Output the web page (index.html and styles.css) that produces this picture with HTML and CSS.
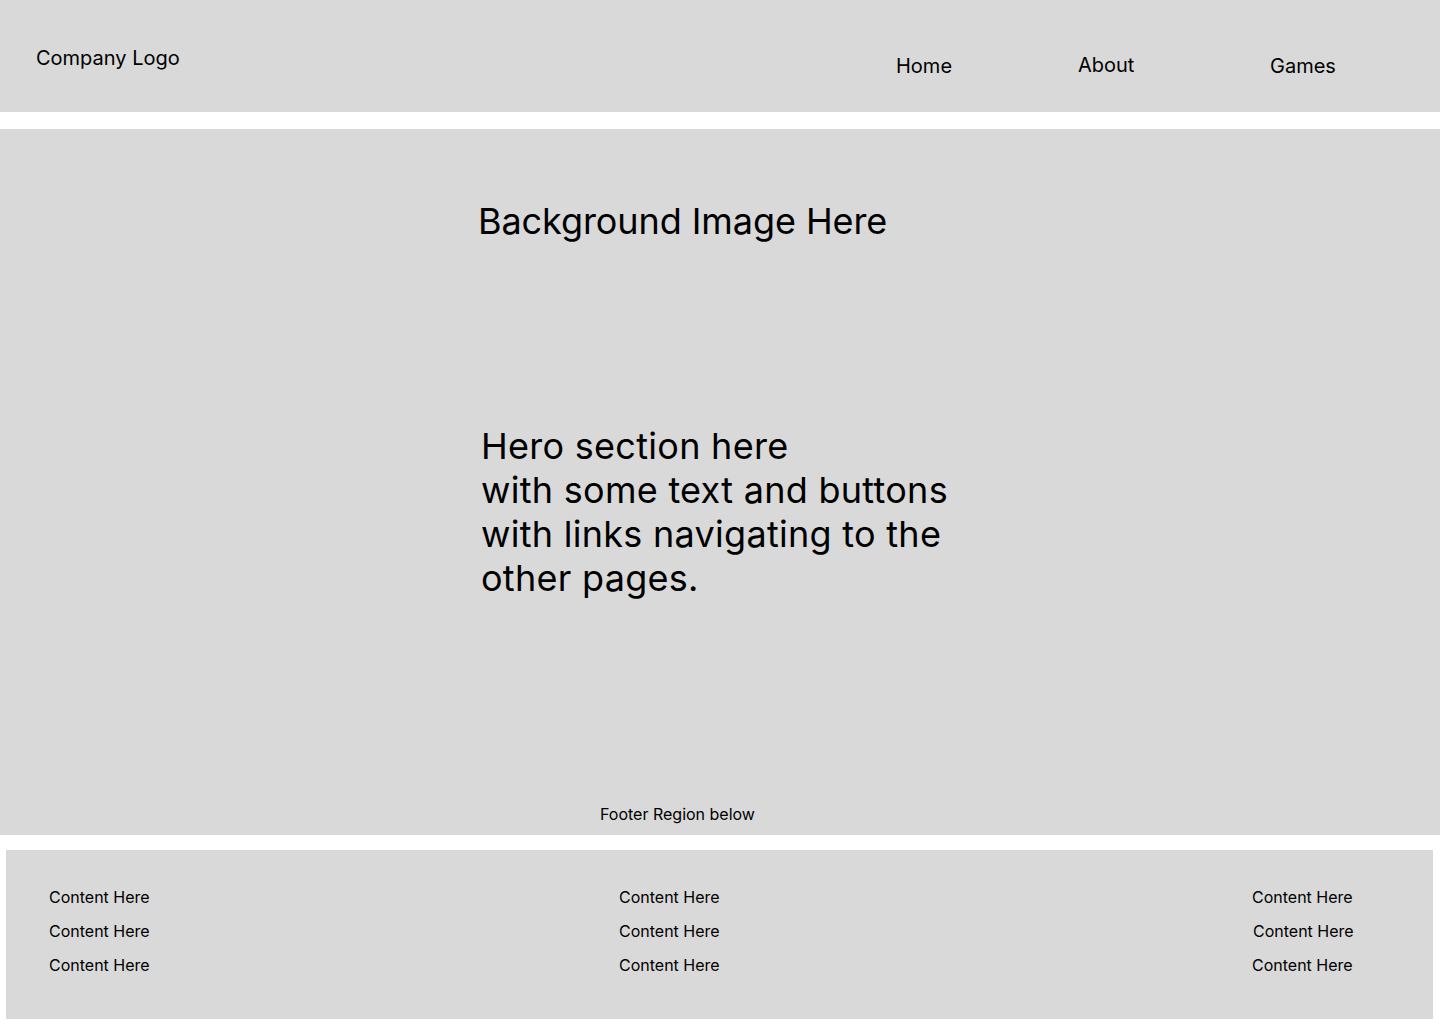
FILE: index.html
```html
<!DOCTYPE html>
<html lang="en">
<head>
<meta charset="utf-8">
<title>Wireframe</title>
<link rel="stylesheet" href="styles.css">
</head>
<body>
<header class="site-header">
  <div class="logo">Company Logo</div>
  <nav class="nav">
    <a class="nav-link" href="#">Home</a>
    <a class="nav-link nav-about" href="#">About</a>
    <a class="nav-link" href="#">Games</a>
  </nav>
</header>
<section class="hero">
  <h1 class="hero-title">Background Image Here</h1>
  <p class="hero-text">Hero section here<br>with some text and buttons<br>with links navigating to the<br>other pages.</p>
  <div class="hero-note">Footer Region below</div>
</section>
<footer class="site-footer">
  <ul class="footer-col">
    <li>Content Here</li>
    <li>Content Here</li>
    <li>Content Here</li>
  </ul>
  <ul class="footer-col">
    <li>Content Here</li>
    <li>Content Here</li>
    <li>Content Here</li>
  </ul>
  <ul class="footer-col footer-col-right">
    <li>Content Here</li>
    <li class="shift">Content Here</li>
    <li>Content Here</li>
  </ul>
</footer>
</body>
</html>
```
FILE: styles.css
```css
* { box-sizing: border-box; }
html, body { margin: 0; padding: 0; }
body {
  background: #ffffff;
  color: #000000;
  font-family: Inter, "Noto Sans", "Liberation Sans", sans-serif;
  width: 1440px;
  height: 1024px;
  overflow: hidden;
}
.site-header {
  height: 112px;
  background: #d9d9d9;
  display: grid;
  grid-template-columns: 860px auto;
  align-items: start;
  padding-left: 36px;
}
.logo {
  font-size: 20px;
  line-height: normal;
  margin-top: 46px;
}
.nav {
  display: grid;
  grid-template-columns: 182px 192px auto;
  margin-top: 54px;
}
.nav-link {
  font-size: 20px;
  line-height: normal;
  color: #000;
  text-decoration: none;
}
.nav-about { margin-top: -1px; }
.hero {
  margin-top: 17px;
  height: 706px;
  background: #d9d9d9;
  display: flex;
  flex-direction: column;
  align-items: flex-start;
}
.hero-title {
  margin: 70px 0 0 478px;
  font-size: 36px;
  font-weight: 400;
  line-height: normal;
  letter-spacing: -0.08px;
}
.hero-text {
  margin: 181px 0 0 481px;
  font-size: 36px;
  font-weight: 400;
  line-height: 44px;
  letter-spacing: 0.28px;
}
.hero-note {
  margin: auto 0 11px 600px;
  font-size: 16px;
  line-height: normal;
}
.site-footer {
  margin: 15px 7px 0 6px;
  height: 169px;
  background: #d9d9d9;
  display: grid;
  grid-template-columns: 570px 633px auto;
  padding: 30px 0 0 43px;
}
.footer-col {
  list-style: none;
  margin: 0;
  padding: 0;
  font-size: 16px;
  line-height: 34px;
}
.footer-col .shift { padding-left: 1px; }
```
